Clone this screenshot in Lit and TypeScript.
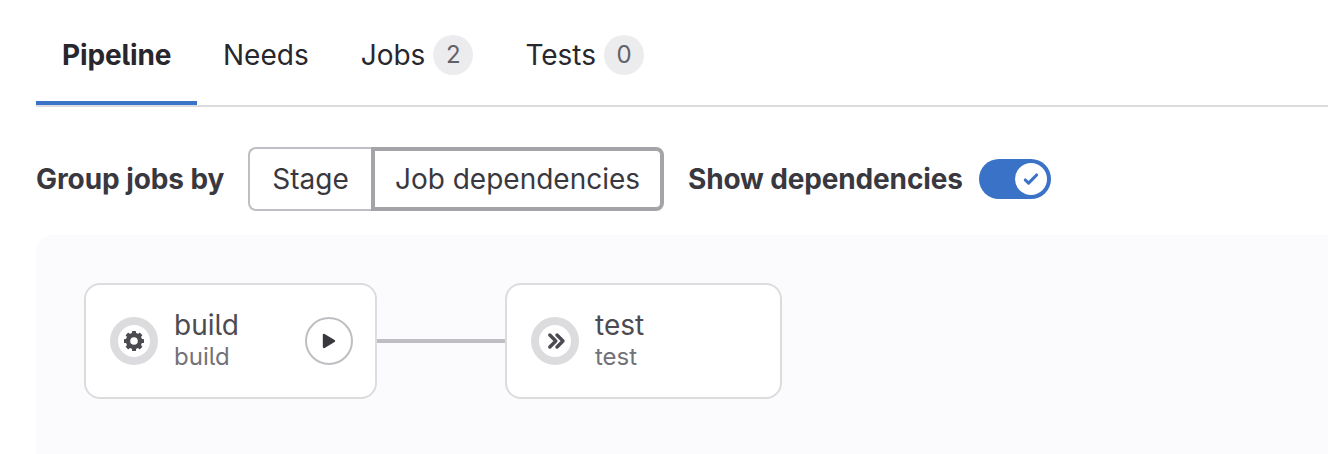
import { LitElement, html, css, svg } from "lit";
import { customElement, property } from "lit/decorators.js";
import { classMap } from "lit/directives/class-map.js";

const gearTooth = [0, 45, 90, 135, 180, 225, 270, 315];

@customElement("status-icon")
class StatusIcon extends LitElement {
  @property() status = "manual";

  static styles = css`
    :host { display: block; flex: none; }
    .ring {
      box-sizing: border-box; width: 48px; height: 48px; border-radius: 50%;
      border: 8px solid #dcdcde; background: #fff;
      display: flex; align-items: center; justify-content: center;
    }
    svg { display: block; flex: none; }
  `;

  render() {
    const gear = svg`
      <g fill="#4c4b51">
        ${gearTooth.map((a) => svg`<rect x="-2" y="-10" width="4" height="5" rx=".5" transform="rotate(${a})" />`)}
      </g>
      <circle r="6" fill="none" stroke="#4c4b51" stroke-width="4.4" />`;
    const skip = svg`
      <path d="M-5.2 -6 L0.8 0 L-5.2 6 M2 -6 L8 0 L2 6" fill="none" stroke="#4c4b51"
        stroke-width="3.4" stroke-linecap="round" stroke-linejoin="round" />`;
    return html`<div class="ring">
      <svg width="32" height="32" viewBox="-16 -16 32 32">${this.status === "manual" ? gear : skip}</svg>
    </div>`;
  }
}

@customElement("job-card")
class JobCard extends LitElement {
  @property() name = "";
  @property() stage = "";
  @property() status = "";
  @property({ type: Boolean }) playable = false;

  static styles = css`
    :host { display: block; }
    .card {
      box-sizing: border-box; height: 116px; width: 100%;
      border: 2px solid #dcdcde; border-radius: 16px; background: #fff;
      display: flex; align-items: center; padding: 0 22px 0 24px;
    }
    .text { margin-left: 16px; flex: 1; padding-bottom: 2px; }
    .name { font-size: 28px; line-height: 34px; color: #4c4b51; }
    .stage { font-size: 24px; line-height: 30px; color: #737278; }
    .play {
      box-sizing: border-box; width: 48px; height: 48px; padding: 0;
      border: 2px solid #bfbfc3; border-radius: 50%; background: #fff;
      display: flex; align-items: center; justify-content: center;
    }
  `;

  render() {
    return html`<div class="card">
      <status-icon .status=${this.status}></status-icon>
      <div class="text">
        <div class="name">${this.name}</div>
        <div class="stage">${this.stage}</div>
      </div>
      ${this.playable
        ? html`<button class="play" aria-label="Run">
            <svg width="32" height="32" viewBox="0 0 32 32">
              <path d="M11 10 L21 16 L11 22 Z" fill="#3a383f" stroke="#3a383f" stroke-width="2.4" stroke-linejoin="round" />
            </svg>
          </button>`
        : null}
    </div>`;
  }
}

@customElement("app-root")
class AppRoot extends LitElement {
  static styles = css`
    :host {
      display: block; height: 454px; overflow: hidden; box-sizing: border-box;
      padding-left: 36px; background: #fff;
      font-family: Inter, "Liberation Sans", sans-serif; font-size: 28px;
      font-feature-settings: "cv05"; color: #28272d;
    }
    .tabs {
      box-sizing: border-box; height: 107px; display: flex; align-items: stretch;
      border-bottom: 2px solid #dcdcde;
    }
    .tab {
      box-sizing: border-box; padding: 8px 26px 0; display: flex; align-items: center;
      border-bottom: 4px solid transparent; white-space: nowrap;
    }
    .tab.active {
      width: 161px; font-weight: 650; letter-spacing: -0.15px; border-bottom-color: #3a72c8;
    }
    .badge {
      width: 40px; height: 40px; margin-left: 8px; border-radius: 50%;
      background: #ececef; color: #626168; font-size: 24px;
      display: flex; align-items: center; justify-content: center;
    }
    .controls {
      display: flex; align-items: center; height: 64px; margin-top: 40px; color: #3a383f;
      white-space: nowrap;
    }
    .label { font-weight: 650; }
    .by { width: 188px; letter-spacing: -0.08px; }
    .show { width: 275px; letter-spacing: -0.15px; }
    .group { display: flex; margin: 0 24px; }
    .option {
      box-sizing: border-box; height: 64px; font: inherit; color: inherit; background: #fff;
      padding: 0; margin: 0; font-feature-settings: inherit;
    }
    .stage {
      width: 123px; border: 2px solid #bfbfc3; border-right: 0; border-radius: 8px 0 0 8px;
    }
    .deps { width: 293px; border: 4px solid #a4a3a8; border-radius: 0 8px 8px 0; }
    .toggle {
      box-sizing: border-box; width: 72px; height: 40px; margin-left: 16px; padding: 4px;
      border-radius: 20px; background: #3a72c8; display: flex; justify-content: flex-end;
    }
    .knob { width: 32px; height: 32px; border-radius: 50%; background: #fff; }
    .knob svg { display: block; }
    .graph {
      box-sizing: border-box; height: 219px; margin-top: 24px; padding: 48px;
      border-top-left-radius: 16px; background: #fbfafd; display: flex; align-items: flex-start;
    }
    .build { width: 293px; }
    .test { width: 277px; }
    .link { width: 128px; height: 4px; margin-top: 56px; background: #bfbfc3; }
  `;

  private tabs = [
    { title: "Pipeline", active: true },
    { title: "Needs" },
    { title: "Jobs", count: 2 },
    { title: "Tests", count: 0 },
  ] as { title: string; active?: boolean; count?: number }[];

  render() {
    return html`
      <nav class="tabs">
        ${this.tabs.map(
          (t) => html`<div class=${classMap({ tab: true, active: !!t.active })}>
            <span>${t.title}</span>${t.count === undefined ? null : html`<span class="badge">${t.count}</span>`}
          </div>`
        )}
      </nav>
      <div class="controls">
        <span class="label by">Group jobs by</span>
        <div class="group">
          <button class="option stage">Stage</button>
          <button class="option deps">Job dependencies</button>
        </div>
        <span class="label show">Show dependencies</span>
        <div class="toggle"><div class="knob">
          <svg width="32" height="32" viewBox="0 0 32 32">
            <path d="M10.3 17 L13.6 20.2 L21.6 12" fill="none" stroke="#3a72c8" stroke-width="3.1" stroke-linecap="round" stroke-linejoin="round" />
          </svg>
        </div></div>
      </div>
      <div class="graph">
        <job-card class="build" name="build" stage="build" status="manual" playable></job-card>
        <div class="link"></div>
        <job-card class="test" name="test" stage="test" status="skipped"></job-card>
      </div>
    `;
  }
}
